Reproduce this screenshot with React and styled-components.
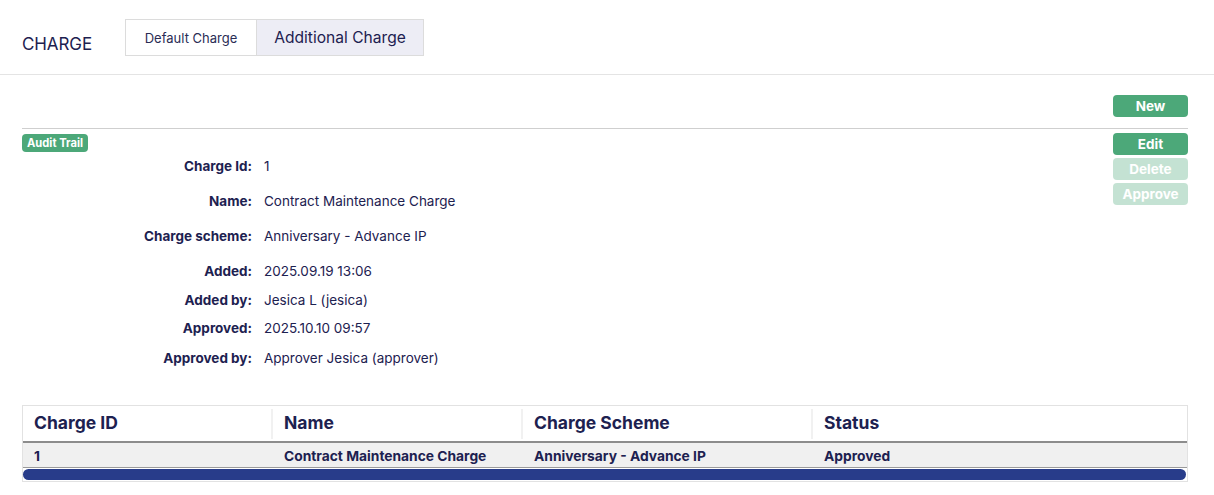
import React from "react";
import styled, { createGlobalStyle } from "styled-components";

const GlobalStyle = createGlobalStyle`
  body {
    margin: 0;
    background: #fff;
    font-family: "Inter", "Noto Sans", sans-serif;
    color: #1d2150;
  }
  * { box-sizing: border-box; }
`;

const Header = styled.div`
  display: flex;
  align-items: flex-start;
  height: 75px;
  padding: 19px 22px 0;
  border-bottom: 1px solid #e4e4e4;
`;

const PageTitle = styled.div`
  font-size: 17px;
  line-height: 20px;
  margin-top: 15px;
  width: 103px;
  letter-spacing: -0.1px;
`;

const Tabs = styled.div`
  display: flex;
  height: 37px;
`;

const Tab = styled.div`
  display: flex;
  align-items: center;
  justify-content: center;
  width: ${(p) => p.width}px;
  border: 1px solid #dcdcdc;
  border-left: ${(p) => (p.active ? "none" : "1px solid #dcdcdc")};
  background: ${(p) => (p.active ? "#ededf5" : "#fff")};
  font-size: ${(p) => (p.active ? "15.6px" : "13px")};
  color: ${(p) => (p.active ? "#1d2150" : "#2a2d55")};
`;

const Content = styled.div`
  padding: 0 26px 0 22px;
`;

const TopBar = styled.div`
  display: flex;
  justify-content: flex-end;
  padding-top: 20px;
  padding-bottom: 11px;
  border-bottom: 1px solid #cfcfcf;
`;

const ActionButton = styled.button`
  width: 75px;
  height: 22px;
  border: none;
  border-radius: 4px;
  background: #4ca879;
  color: #fff;
  font-family: "Inter", sans-serif;
  font-weight: 700;
  font-size: 13.5px;
  padding: 0;
  opacity: ${(p) => (p.disabled ? 0.32 : 1)};
`;

const Body = styled.div`
  display: flex;
  justify-content: space-between;
  padding-top: 4px;
`;

const Info = styled.div`
  display: flex;
  flex-direction: column;
  align-items: flex-start;
`;

const Badge = styled.span`
  display: inline-block;
  height: 18px;
  line-height: 18px;
  padding: 0 5px;
  margin-top: 1px;
  border-radius: 4px;
  background: #4ca879;
  color: #fff;
  font-weight: 700;
  font-size: 11.2px;
`;

const Details = styled.div`
  display: flex;
  flex-direction: column;
`;

const DetailRow = styled.div`
  display: flex;
  align-items: center;
  gap: 12px;
  height: 20px;
  margin-top: ${(p) => p.gap}px;
  font-size: 13.5px;
`;

const Label = styled.div`
  width: 230px;
  text-align: right;
  font-weight: 700;
`;

const Value = styled.div`
  font-weight: 400;
`;

const ButtonColumn = styled.div`
  display: flex;
  flex-direction: column;
  gap: 3px;
`;

const TableBox = styled.div`
  margin-top: 37px;
  border: 1px solid #e2e2e2;
`;

const Row = styled.div`
  display: grid;
  grid-template-columns: 250px 250px 290px 1fr;
  align-items: center;
  height: ${(p) => (p.head ? 37 : 25)}px;
  background: ${(p) => (p.head ? "#fff" : "#f0f0f0")};
  border-bottom: ${(p) => (p.head ? "2px solid #8c8c8c" : "1px solid #9a9a9a")};
`;

const HeadCell = styled.div`
  height: 30px;
  display: flex;
  align-items: center;
  padding-left: 11px;
  padding-bottom: 3px;
  font-size: 17.5px;
  font-weight: 700;
  border-right: ${(p) => (p.last ? "none" : "2px solid #f1f1f1")};
`;

const Cell = styled.div`
  padding-left: 11px;
  padding-top: 2px;
  font-size: 13.8px;
  font-weight: 700;
`;

const ScrollTrack = styled.div`
  height: 13px;
  padding: 1px 1px 1px 0;
  background: #fff;
`;

const ScrollThumb = styled.div`
  height: 11px;
  border-radius: 6px;
  background: #283c8a;
`;

const details = [
  { label: "Charge Id:", value: "1", gap: 4 },
  { label: "Name:", value: "Contract Maintenance Charge", gap: 15 },
  { label: "Charge scheme:", value: "Anniversary - Advance IP", gap: 15 },
  { label: "Added:", value: "2025.09.19 13:06", gap: 15 },
  { label: "Added by:", value: "Jesica L (jesica)", gap: 9 },
  { label: "Approved:", value: "2025.10.10 09:57", gap: 8 },
  { label: "Approved by:", value: "Approver Jesica (approver)", gap: 10 },
];

const columns = ["Charge ID", "Name", "Charge Scheme", "Status"];
const rows = [["1", "Contract Maintenance Charge", "Anniversary - Advance IP", "Approved"]];

export default function App() {
  return (
    <>
      <GlobalStyle />
      <Header>
        <PageTitle>CHARGE</PageTitle>
        <Tabs>
          <Tab width={132}>Default Charge</Tab>
          <Tab width={167} active>
            Additional Charge
          </Tab>
        </Tabs>
      </Header>
      <Content>
        <TopBar>
          <ActionButton>New</ActionButton>
        </TopBar>
        <Body>
          <Info>
            <Badge>Audit Trail</Badge>
            <Details>
              {details.map((d) => (
                <DetailRow key={d.label} gap={d.gap}>
                  <Label>{d.label}</Label>
                  <Value>{d.value}</Value>
                </DetailRow>
              ))}
            </Details>
          </Info>
          <ButtonColumn>
            <ActionButton>Edit</ActionButton>
            <ActionButton disabled>Delete</ActionButton>
            <ActionButton disabled>Approve</ActionButton>
          </ButtonColumn>
        </Body>
        <TableBox>
          <Row head>
            {columns.map((c, i) => (
              <HeadCell key={c} last={i === columns.length - 1}>
                {c}
              </HeadCell>
            ))}
          </Row>
          {rows.map((r) => (
            <Row key={r[0]}>
              {r.map((v, i) => (
                <Cell key={i}>{v}</Cell>
              ))}
            </Row>
          ))}
          <ScrollTrack>
            <ScrollThumb />
          </ScrollTrack>
        </TableBox>
      </Content>
    </>
  );
}
